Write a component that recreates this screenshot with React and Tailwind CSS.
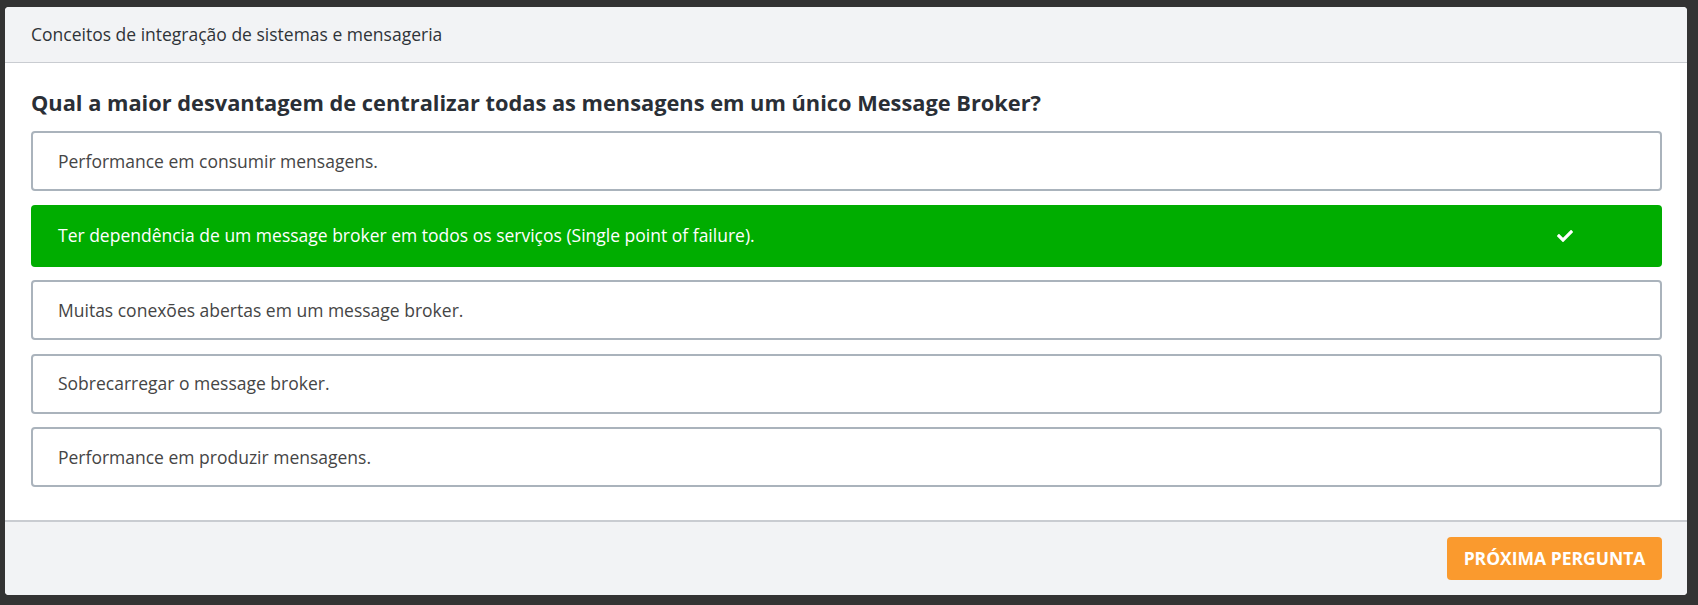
import React from "react";
import { FaCheck } from "react-icons/fa";

const options = [
  { text: "Performance em consumir mensagens.", correct: false },
  { text: "Ter dependência de um message broker em todos os serviços (Single point of failure).", correct: true },
  { text: "Muitas conexões abertas em um message broker.", correct: false },
  { text: "Sobrecarregar o message broker.", correct: false },
  { text: "Performance em produzir mensagens.", correct: false },
];

export default function App() {
  return (
    <div
      className="w-[1698px] h-[605px] bg-[#333333] pt-[7px] pl-[5px]"
      style={{ fontFamily: '"Open Sans", "Noto Sans", sans-serif' }}
    >
      <div className="w-[1682px] h-[588px] bg-white rounded-[4px] overflow-hidden flex flex-col">
        <div className="h-[56px] shrink-0 bg-[#f2f3f5] border-b border-[#c9ccd1] flex items-center pl-[26px] text-[17.5px] text-[#2f3338]">
          Conceitos de integração de sistemas e mensageria
        </div>
        <div className="flex-1 pl-[26px] pr-[25px] pt-[25px]">
          <h1 className="text-[21.8px] font-bold text-[#2a2f36] leading-[30px] mb-[13px]">
            Qual a maior desvantagem de centralizar todas as mensagens em um único Message Broker?
          </h1>
          <div className="flex flex-col gap-[13.5px]">
            {options.map((o) =>
              o.correct ? (
                <div
                  key={o.text}
                  className="h-[62px] rounded-[4px] bg-[#00ad00] flex items-center pl-[27px] pr-[89px] text-[17.5px] text-white font-medium"
                >
                  <span className="flex-1">{o.text}</span>
                  <FaCheck className="text-white w-[16px] h-[16px]" />
                </div>
              ) : (
                <div
                  key={o.text}
                  className="h-[60px] rounded-[4px] border-2 border-[#aab3bc] bg-white flex items-center pl-[25px] text-[17.5px] text-[#454545]"
                >
                  {o.text}
                </div>
              )
            )}
          </div>
        </div>
        <div className="h-[75px] shrink-0 bg-[#f2f3f5] border-t-2 border-[#c9ccd1] flex items-center justify-end pr-[25px]">
          <button className="w-[215px] h-[43px] bg-[#fa9a2e] rounded-[4px] text-white font-bold text-[17.5px]">
            PRÓXIMA PERGUNTA
          </button>
        </div>
      </div>
    </div>
  );
}
